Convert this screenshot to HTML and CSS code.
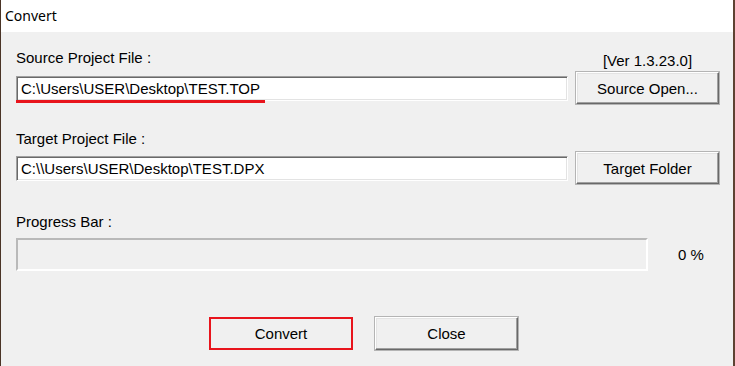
FILE: index.html
```html
<!DOCTYPE html>
<html>
<head>
<meta charset="utf-8">
<link rel="stylesheet" href="styles.css">
</head>
<body>
<div class="window">
  <div class="titlebar">Convert</div>
  <div class="content">
    <div class="label-row first">
      <span class="label">Source Project File :</span>
      <span class="ver">[Ver 1.3.23.0]</span>
    </div>
    <div class="field-row">
      <div class="input">
        <span>C:\Users\USER\Desktop\TEST.TOP</span>
        <div class="mark-line"></div>
      </div>
      <div class="btn side">Source Open...</div>
    </div>

    <div class="label-row second">
      <span class="label">Target Project File :</span>
    </div>
    <div class="field-row">
      <div class="input"><span>C:\\Users\USER\Desktop\TEST.DPX</span></div>
      <div class="btn side">Target Folder</div>
    </div>

    <div class="label-row third">
      <span class="label">Progress Bar :</span>
    </div>
    <div class="progress-row">
      <div class="progress"></div>
      <span class="percent">0 %</span>
    </div>

    <div class="actions">
      <div class="btn action marked">Convert</div>
      <div class="btn action">Close</div>
    </div>
  </div>
</div>
</body>
</html>
```

FILE: styles.css
```css
* { box-sizing: border-box; }
html, body {
  margin: 0;
  padding: 0;
  width: 735px;
  height: 366px;
  overflow: hidden;
  background: #5a3f30;
}
.window {
  width: 735px;
  height: 366px;
  border-left: 1px solid #4a3426;
  border-right: 2px solid #5e4232;
  background: #f0f0f0;
  font-family: "Liberation Sans", Arial, sans-serif;
  font-size: 15px;
  color: #000;
}
.titlebar {
  height: 32px;
  background: #fff;
  padding: 6px 0 0 4px;
  font-family: "Noto Sans", "Open Sans", sans-serif;
  font-size: 14px;
  line-height: 19px;
  color: #000;
}
.content {
  padding: 0 14px 0 15px;
}
.label-row {
  display: flex;
  align-items: flex-start;
  line-height: 17px;
}
.label-row.first { margin-top: 17px; margin-bottom: 3px; }
.label-row.second { margin-top: 26px; margin-bottom: 5px; }
.label-row.third { margin-top: 29px; margin-bottom: 8px; }
.label { flex: 1; }
.ver {
  width: 143px;
  text-align: center;
  margin-top: 3px;
}
.field-row {
  display: flex;
  align-items: center;
  gap: 8px;
  height: 32px;
}
.input {
  position: relative;
  flex: 1;
  height: 25px;
  background: #fff;
  border-top: 1px solid #a0a0a0;
  border-left: 1px solid #a0a0a0;
  border-right: 1px solid #fff;
  border-bottom: 1px solid #fff;
  box-shadow: inset 1px 1px 0 #696969, inset -1px -1px 0 #e3e3e3;
  padding-left: 4px;
  display: flex;
  align-items: center;
  line-height: 17px;
  white-space: nowrap;
}
.mark-line {
  position: absolute;
  left: -1px;
  bottom: -3px;
  width: 249px;
  height: 3px;
  background: #e8141c;
}
.btn {
  display: flex;
  align-items: center;
  justify-content: center;
  background: #f0f0f0;
  border-top: 1px solid #fff;
  border-left: 1px solid #fff;
  border-right: 1px solid #696969;
  border-bottom: 1px solid #696969;
  box-shadow: inset -1px -1px 0 #a0a0a0, inset 1px 1px 0 #e3e3e3, 0 0 0 1px #b4b4b4;
  line-height: 17px;
}
.btn.side {
  width: 143px;
  height: 32px;
}
.progress-row {
  display: flex;
  align-items: center;
}
.progress {
  width: 632px;
  height: 33px;
  background: #f0f0f0;
  border-top: 2px solid #b9b9b9;
  border-left: 2px solid #b9b9b9;
  border-right: 2px solid #fff;
  border-bottom: 2px solid #fff;
}
.percent {
  margin-left: 30px;
  line-height: 17px;
}
.actions {
  display: flex;
  gap: 22px;
  margin-top: 46px;
  padding-left: 193px;
}
.btn.action {
  width: 143px;
  height: 33px;
}
.btn.marked {
  width: 144px;
  border: 2px solid #e8141c;
  box-shadow: none;
}
```
